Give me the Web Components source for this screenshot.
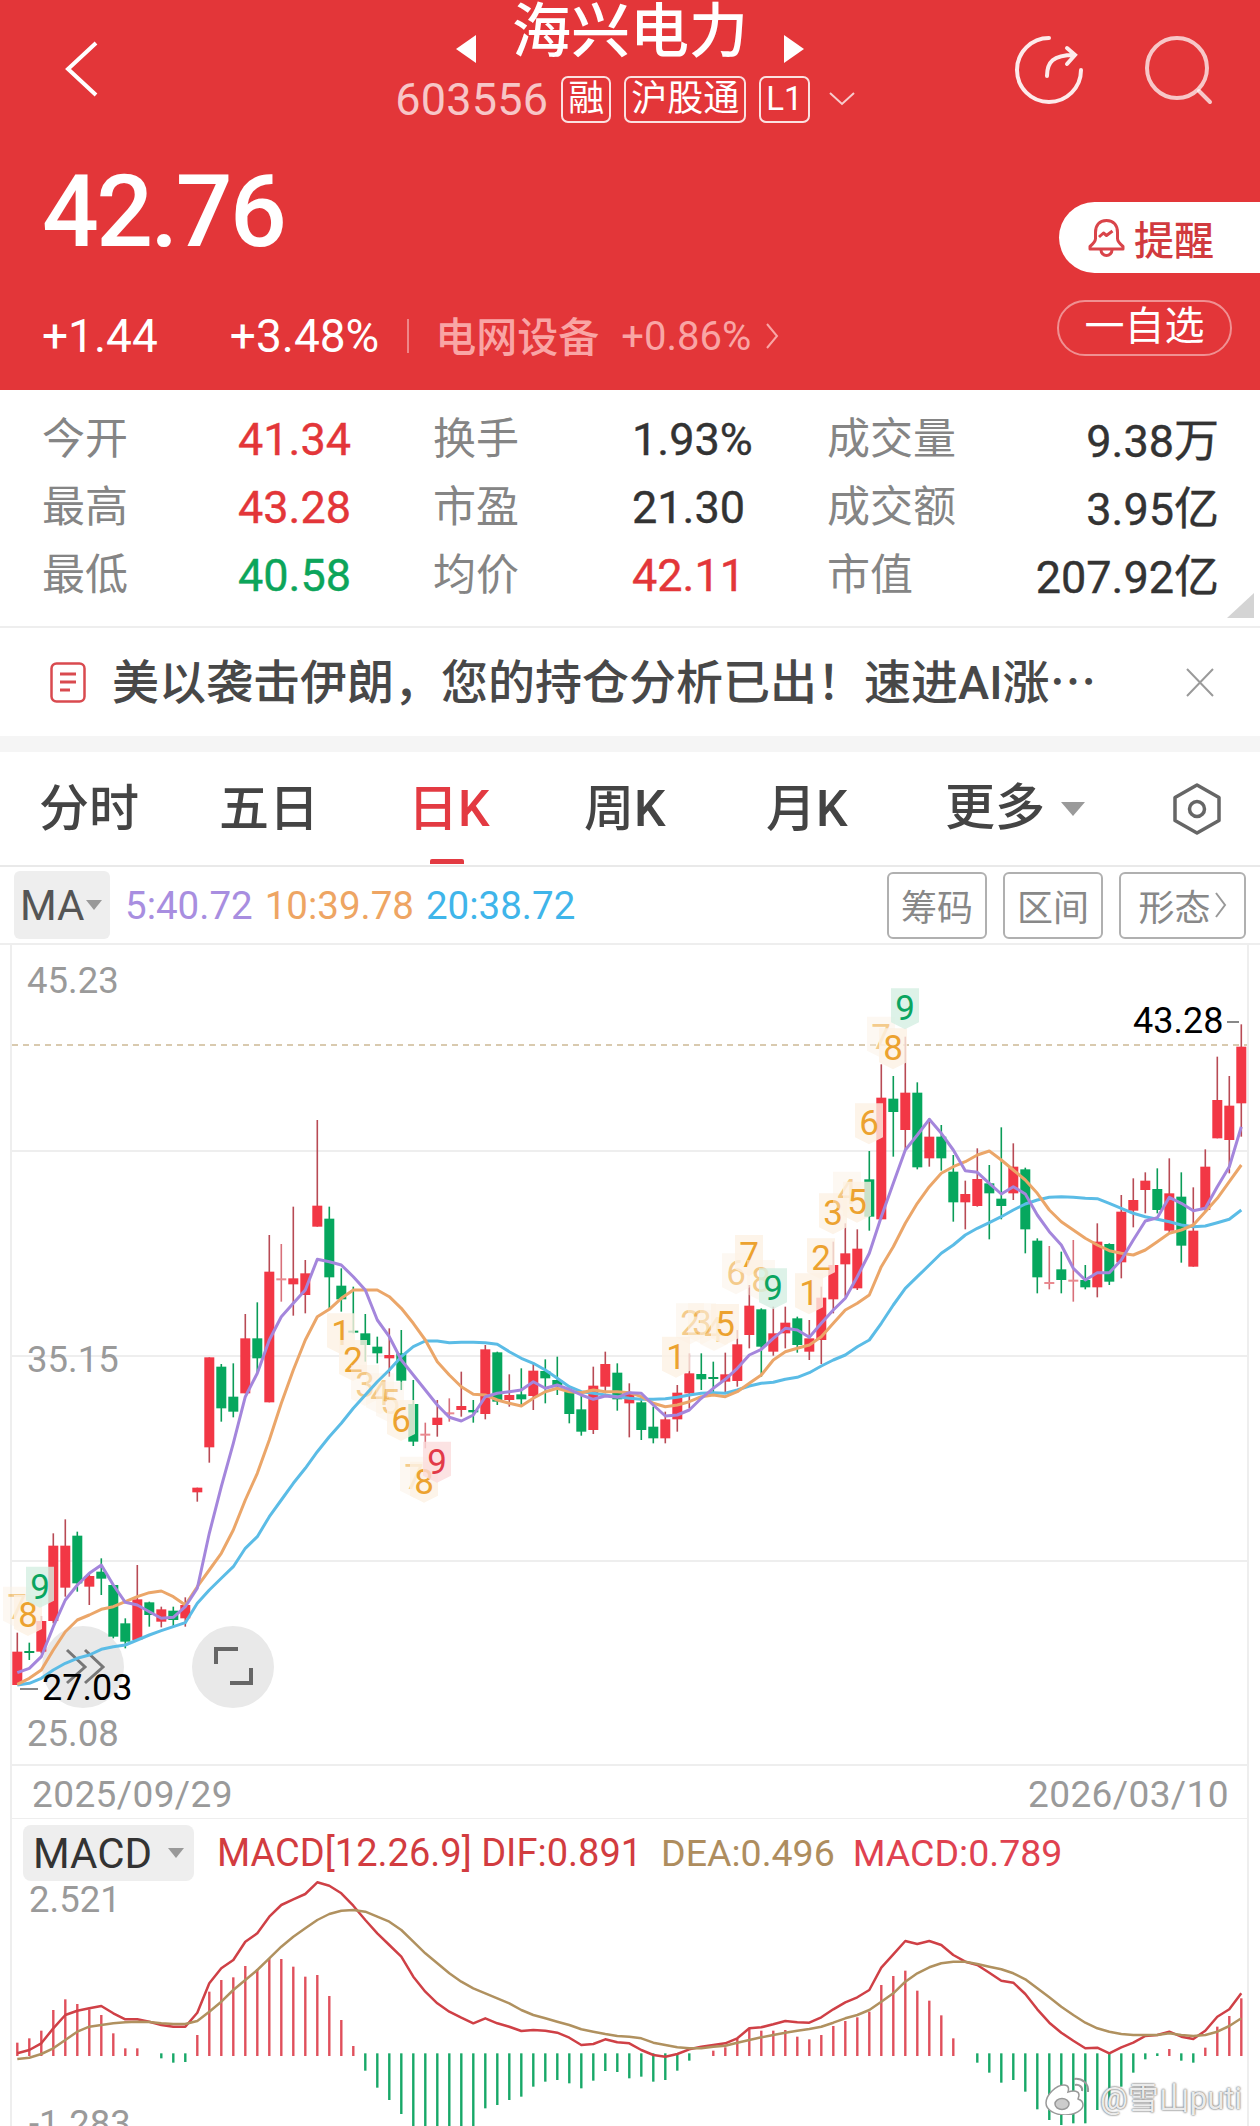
<!DOCTYPE html>
<html lang="zh-Hans">
<head>
<meta charset="utf-8">
<title>海兴电力</title>
<style>
  html, body { margin: 0; padding: 0; background: #fff; }
  body { width: 1260px; height: 2126px; overflow: hidden; font-family: Roboto, "Noto Sans CJK SC", sans-serif; }
</style>
</head>
<body>
<stock-header></stock-header>
<quote-stats></quote-stats>
<news-banner>美以袭击伊朗，您的持仓分析已出！速进AI涨<span style='font-family:"Noto Sans CJK SC",sans-serif'>…</span></news-banner>
<period-tabs></period-tabs>
<ma-bar></ma-bar>
<kline-chart></kline-chart>
<macd-panel></macd-panel>

<script>
const FONT = 'Roboto, "Noto Sans CJK SC", sans-serif'
const candleX = (i) => 17.3 + i * 12

class StockHeader extends HTMLElement {
  constructor() {
    super()
    this.attachShadow({ mode: 'open' })
    this.shadowRoot.innerHTML = `
      <style>
        :host { display: block; height: 390px; background: #e33639; color: #fff; font-family: ${FONT}; overflow: hidden; }
        .nav { display: grid; grid-template-columns: 1fr 474px 1fr; height: 174px; }
        .back { margin: 41px 0 0 64px; }
        .center { display: flex; flex-direction: column; align-items: center; }
        .title { display: flex; align-items: center; gap: 36px; height: 58px; margin-top: 3px; }
        .title h1 { margin: 0; font-size: 59px; line-height: 58px; font-weight: 500; }
        .tri { width: 20px; height: 28px; margin-top: 33px; }
        .code { display: flex; align-items: center; height: 48px; margin-top: 14px; padding-right: 10px; gap: 13px; white-space: nowrap; }
        .code .num { font-size: 45px; color: rgba(255,255,255,.72); letter-spacing: .2px; }
        .tag { box-sizing: border-box; height: 47px; padding: 0 5px; border: 2px solid rgba(255,255,255,.85); border-radius: 7px; font-size: 36px; line-height: 42px; }
        .tag.l { padding: 0 5px; font-size: 33px; }
        .code svg { margin-left: 6px; }
        .icons { display: flex; justify-content: flex-end; gap: 61px; padding: 35px 47px 0 0; }
        .quote { display: flex; justify-content: space-between; }
        .left { padding-left: 42px; }
        .price { font-size: 100px; line-height: 100px; font-weight: 500; letter-spacing: -2.600px; margin-top: -12px; }
        .change { display: flex; align-items: center; height: 50px; margin-top: 49px; font-size: 46px; }
        .change .pct { margin-left: 72px; }
        .change i { width: 2px; height: 34px; background: rgba(255,255,255,.4); margin: 0 26px 0 28px; }
        .change .sector { font-size: 41px; font-weight: 500; color: #f9a5a5; margin-top: -4px; }
        .change .rate { font-size: 40px; font-weight: 400; color: #f9a5a5; margin-left: 22px; }
        .change svg { margin-left: 14px; }
        .right { display: flex; flex-direction: column; align-items: flex-end; margin-top: 28px; }
        .remind { box-sizing: border-box; display: flex; align-items: center; gap: 9px; width: 201px; height: 71px; padding-left: 29px; background: #fff; border-radius: 36px 0 0 36px; color: #d13a3e; font-size: 40px; font-weight: 500; }
        .fav { box-sizing: border-box; width: 175px; height: 56px; margin: 27px 28px 0 0; border: 2px solid rgba(255,255,255,.45); border-radius: 28px; font-size: 40px; line-height: 50px; text-align: center; }
      </style>
      <div class="nav">
        <svg class="back" width="36" height="56" viewBox="0 0 36 56" fill="none" stroke="#fff" stroke-width="4"><path d="M32 2 4 28l28 26"/></svg>
        <div class="center">
          <div class="title">
            <svg class="tri" viewBox="0 0 20 28"><path d="M20 0v28L0 14z" fill="#fff"/></svg>
            <h1>海兴电力</h1>
            <svg class="tri" viewBox="0 0 20 28"><path d="M0 0v28l20-14z" fill="#fff"/></svg>
          </div>
          <div class="code">
            <span class="num">603556</span>
            <span class="tag">融</span>
            <span class="tag">沪股通</span>
            <span class="tag l">L1</span>
            <svg width="26" height="14" viewBox="0 0 26 14" fill="none" stroke="rgba(255,255,255,.75)" stroke-width="2"><path d="M1 1l12 11L25 1"/></svg>
          </div>
        </div>
        <div class="icons">
          <svg width="70" height="70" viewBox="1015 32 70 70" fill="none" stroke="#fff" stroke-width="4" stroke-linecap="round" stroke-opacity=".9">
            <path d="M1050 35a32 32 0 1 0 32 32"/>
            <path d="M1048 73c0-14 6-21 27-21M1068 45l8 7-8 9"/>
          </svg>
          <svg width="68" height="70" viewBox="1144 32 68 70" fill="none" stroke="#fff" stroke-width="4" stroke-linecap="round" stroke-opacity=".72">
            <circle cx="1176" cy="65" r="30"/><path d="M1198 88l11 11"/>
          </svg>
        </div>
      </div>
      <div class="quote">
        <div class="left">
          <div class="price">42.76</div>
          <div class="change">
            <span>+1.44</span><span class="pct">+3.48%</span><i></i>
            <span class="sector">电网设备</span><span class="rate">+0.86%</span>
            <svg width="14" height="28" viewBox="0 0 14 28" fill="none" stroke="#f9a5a5" stroke-width="2"><path d="M2 2l10 12L2 26"/></svg>
          </div>
        </div>
        <div class="right">
          <div class="remind">
            <svg width="37" height="38" viewBox="0 0 37 38" fill="none" stroke="#d9444a" stroke-width="3" stroke-linejoin="round"><path d="M18.500 1.500c-7.500 0-11 5.500-11 12v6c0 3-2 5-5.500 8v2.500h33V27.500c-3.500-3-5.500-5-5.500-8v-6c0-6.500-3.500-12-11-12z"/><path d="M13 31c0 3 2.500 5.500 5.500 5.500S24 34 24 31"/><path d="M11 18l4.500-4 3 2.500 6-4.500"/></svg>
            <span>提醒</span>
          </div>
          <div class="fav">一自选</div>
        </div>
      </div>`
  }
}
customElements.define('stock-header', StockHeader)

class QuoteStats extends HTMLElement {
  constructor() {
    super()
    this.attachShadow({ mode: 'open' })
    const rows = [
      ['今开', '41.34', 'r', '换手', '1.93%', '', '成交量', '9.38万'],
      ['最高', '43.28', 'r', '市盈', '21.30', '', '成交额', '3.95亿'],
      ['最低', '40.58', 'g', '均价', '42.11', 'r', '市值', '207.92亿']
    ]
    const cells = rows.map((r) => `
      <span class="k">${r[0]}</span><span class="v ${r[2]}">${r[1]}</span>
      <span class="k">${r[3]}</span><span class="v ${r[5]}">${r[4]}</span>
      <span class="k">${r[6]}</span><span class="v end">${r[7]}</span>`).join('')
    this.shadowRoot.innerHTML = `
      <style>
        :host { display: block; position: relative; height: 236px; border-bottom: 2px solid #eee; font-family: ${FONT}; }
        .grid { display: grid; grid-template-columns: 196px 195px 199px 195px 1fr 220px; grid-auto-rows: 68px; align-items: center; padding: 11px 41px 0 42px; }
        .k { font-size: 43px; color: #858585; }
        .v { font-size: 45px; color: #333; white-space: nowrap; -webkit-text-stroke: .4px currentColor; padding-top: 9px; }
        .v.r { color: #e33639; } .v.g { color: #0ca55b; }
        .end { text-align: right; padding-top: 4px; }
        .corner { position: absolute; right: 6px; bottom: 8px; width: 27px; height: 25px; background: #d4d4d4; clip-path: polygon(100% 0, 100% 100%, 0 100%); }
      </style>
      <div class="grid">${cells}</div>
      <div class="corner"></div>`
  }
}
customElements.define('quote-stats', QuoteStats)

class NewsBanner extends HTMLElement {
  constructor() {
    super()
    this.attachShadow({ mode: 'open' })
    this.shadowRoot.innerHTML = `
      <style>
        :host { display: flex; align-items: center; height: 108px; padding-left: 50px; border-bottom: 16px solid #f5f5f5; font-family: ${FONT}; font-size: 47px; font-weight: 500; color: #484848; }
        .text { margin: -7px 0 0 26px; white-space: nowrap; flex: 1; }
        .x { margin-right: 46px; }
      </style>
      <svg width="36" height="41" viewBox="0 0 36 41" fill="none" stroke="#d94a4f" stroke-width="2.500"><rect x="1.500" y="1.500" width="33" height="38" rx="5"/><path d="M10 12h16M10 20h16M10 28h10" stroke-width="3"/></svg>
      <div class="text"><slot></slot></div>
      <svg class="x" width="28" height="29" viewBox="0 0 28 29" fill="none" stroke="#9a9a9a" stroke-width="2"><path d="M1 1l26 27M27 1 1 28"/></svg>`
  }
}
customElements.define('news-banner', NewsBanner)

class PeriodTabs extends HTMLElement {
  constructor() {
    super()
    this.attachShadow({ mode: 'open' })
    const tabs = [['分时', 180], ['五日', 189], ['日K', 176, true], ['周K', 182], ['月K', 179]]
    this.shadowRoot.innerHTML = `
      <style>
        :host { display: flex; align-items: center; height: 113px; padding-left: 39px; border-bottom: 2px solid #e9e9e9; font-family: ${FONT}; font-size: 50px; font-weight: 500; color: #444; }
        .t { position: relative; height: 113px; line-height: 115px; white-space: nowrap; }
        .on { color: #e33a42; }
        .on::after { content: ""; position: absolute; left: 22px; bottom: 1px; width: 34px; height: 5px; background: #e33a42; border-radius: 2px 2px 0 0; }
        .more { display: flex; align-items: center; gap: 16px; }
        .hex { margin-left: auto; margin-right: 39px; }
      </style>
      ${tabs.map((t) => `<div class="t ${t[2] ? 'on' : ''}" style="width:${t[1]}px">${t[0]}</div>`).join('')}
      <div class="t more">更多<svg width="24" height="14" viewBox="0 0 24 14"><path d="M0 0h24L12 14z" fill="#9a9a9a"/></svg></div>
      <svg class="hex" width="48" height="52" viewBox="0 0 48 52" fill="none" stroke="#666" stroke-width="3.500" stroke-linejoin="round"><path d="M24 2 46 14.500v23L24 50 2 37.500v-23z"/><circle cx="24" cy="26" r="7.500"/></svg>`
  }
}
customElements.define('period-tabs', PeriodTabs)

class MaBar extends HTMLElement {
  constructor() {
    super()
    this.attachShadow({ mode: 'open' })
    this.shadowRoot.innerHTML = `
      <style>
        :host { display: flex; align-items: center; height: 76px; padding: 0 14px; border-bottom: 2px solid #eee; font-family: ${FONT}; font-size: 38.500px; }
        .ma { box-sizing: border-box; display: flex; align-items: center; gap: 2px; width: 96px; height: 68px; padding-left: 6px; background: #eee; border-radius: 6px; color: #555; font-size: 42px; }
        .vals { display: flex; gap: 12px; margin-left: 15px; }
        .btns { display: flex; gap: 16px; margin-left: auto; }
        .b { box-sizing: border-box; display: flex; align-items: center; justify-content: center; gap: 4px; width: 100px; height: 67px; border: 2px solid #b0b0b0; border-radius: 6px; color: #888; font-size: 36px; }
        .b.w { width: 127px; }
      </style>
      <div class="ma">MA<svg width="16" height="10" viewBox="0 0 16 10"><path d="M0 0h16L8 10z" fill="#999"/></svg></div>
      <div class="vals">
        <span style="color:#a88ee0">5:40.72</span>
        <span style="color:#eea563">10:39.78</span>
        <span style="color:#3fb5ea">20:38.72</span>
      </div>
      <div class="btns">
        <div class="b">筹码</div>
        <div class="b">区间</div>
        <div class="b w">形态<svg width="12" height="26" viewBox="0 0 12 26" fill="none" stroke="#999" stroke-width="2"><path d="M1 1l9 12-9 12"/></svg></div>
      </div>`
  }
}
customElements.define('ma-bar', MaBar)

// candle rows: wick top, body top, body bottom, wick bottom, colour
// y values are in thirds of a pixel below y=940, read off the zoomed reference
const CANDLES = [
  [2078,2135,2235,2235,'r'],[2108,2133,2137,2160,'g'],[2028,2043,2135,2140,'r'],[1780,1817,2043,2050,'r'],
  [1738,1817,1943,1970,'r'],[1775,1787,1930,1955,'g'],[1900,1908,1940,1995,'r'],[1855,1895,1916,1965,'g'],
  [1935,1935,2090,2095,'g'],[2035,2050,2105,2125,'g'],[1875,1978,2100,2100,'r'],[1985,1987,2025,2060,'g'],
  [2000,2008,2045,2062,'r'],[2000,2012,2040,2060,'g'],[1972,1995,2035,2060,'r'],[1643,1643,1657,1685,'r'],
  [1252,1252,1522,1568,'r'],[1272,1280,1405,1445,'g'],[1270,1370,1415,1432,'g'],[1122,1195,1360,1360,'r'],
  [1087,1195,1255,1300,'g'],[885,995,1387,1387,'r'],[912,1015,1018,1085,'r'],[800,1015,1033,1127,'r'],
  [960,1000,1065,1120,'r'],[540,797,860,860,'r'],[800,836,1012,1105,'g'],[985,1037,1078,1115,'g'],
  [1040,1172,1176,1180,'g'],[1122,1180,1215,1265,'g'],[1190,1220,1240,1270,'g'],[1165,1245,1255,1310,'r'],
  [1170,1240,1322,1350,'g'],[1320,1392,1505,1518,'g'],[1448,1481,1484,1525,'r'],[1380,1433,1455,1490,'r'],
  [1375,1417,1420,1445,'r'],[1295,1398,1410,1430,'r'],[1380,1410,1417,1448,'g'],[1215,1228,1422,1438,'r'],
  [1235,1237,1385,1395,'g'],[1303,1365,1380,1400,'r'],[1285,1363,1378,1400,'g'],[1270,1292,1368,1410,'r'],
  [1258,1293,1315,1390,'g'],[1250,1320,1335,1365,'g'],[1350,1355,1422,1450,'g'],[1355,1408,1475,1487,'g'],
  [1280,1337,1470,1482,'r'],[1235,1272,1340,1360,'r'],[1270,1298,1378,1412,'g'],[1330,1360,1390,1492,'r'],
  [1370,1387,1470,1500,'g'],[1400,1460,1495,1510,'g'],[1415,1438,1495,1510,'r'],[1335,1358,1438,1475,'r'],
  [1240,1300,1360,1405,'r'],[1240,1302,1318,1350,'g'],[1265,1311,1314,1360,'g'],[1238,1303,1325,1360,'r'],
  [1170,1213,1323,1340,'r'],[1035,1097,1185,1225,'r'],[1105,1108,1220,1310,'g'],[1100,1180,1235,1247,'r'],
  [1100,1148,1180,1225,'r'],[1130,1135,1215,1238,'g'],[1140,1195,1235,1260,'r'],[1040,1073,1200,1272,'r'],
  [905,975,1078,1120,'r'],[850,940,973,1070,'r'],[868,926,1045,1050,'r'],[633,718,830,872,'g'],
  [373,473,838,838,'r'],[408,476,516,650,'g'],[290,458,570,630,'r'],[427,458,682,688,'g'],
  [535,590,655,680,'r'],[555,590,655,692,'g'],[645,695,787,845,'g'],[722,762,787,868,'r'],
  [625,717,798,800,'r'],[675,730,760,898,'g'],[562,776,798,838,'g'],[610,680,760,780,'r'],
  [683,688,868,940,'g'],[895,902,1012,1060,'g'],[918,1026,1029,1048,'r'],[935,988,1020,1060,'g'],
  [900,1019,1022,1085,'r'],[975,1020,1042,1048,'g'],[850,905,1042,1072,'r'],[910,912,1025,1035,'g'],
  [765,815,967,1015,'r'],[715,780,812,862,'r'],[697,722,750,820,'r'],[685,747,810,820,'g'],
  [655,760,872,878,'r'],[697,770,917,968,'g'],[742,872,980,980,'r'],[628,680,810,815,'r'],
  [350,480,595,595,'r'],[408,497,600,700,'r'],[253,320,490,590,'r']
]
const MA5 = [2198,2185,2150,2060,1980,1935,1900,1875,1935,1987,1995,2015,2035,2032,2000,1945,1780,1640,1510,1370,1300,1200,1130,1090,1050,958,965,975,1010,1050,1140,1190,1260,1305,1350,1395,1432,1443,1425,1370,1360,1355,1350,1325,1345,1335,1348,1365,1378,1368,1372,1358,1360,1395,1428,1425,1410,1375,1345,1318,1285,1245,1228,1195,1165,1170,1192,1150,1110,1075,1010,940,830,730,630,585,538,580,630,692,697,730,762,740,762,825,875,915,985,1020,998,998,960,900,843,833,772,790,812,805,740,680,560]
const MA10 = [2233,2215,2190,2130,2075,2040,2025,2008,2000,1985,1970,1958,1953,1970,1995,1940,1890,1840,1770,1680,1600,1500,1390,1290,1200,1130,1108,1075,1050,1050,1050,1070,1105,1150,1200,1265,1305,1340,1363,1365,1380,1390,1398,1375,1355,1345,1355,1358,1350,1355,1355,1358,1370,1390,1400,1395,1385,1370,1365,1370,1355,1330,1305,1260,1235,1225,1215,1190,1150,1110,1090,1065,980,920,850,790,740,700,680,665,645,633,660,690,720,760,810,845,870,895,915,932,940,945,930,905,880,870,855,815,775,725,675]
const MA20 = [2235,2230,2215,2190,2170,2155,2145,2128,2120,2115,2100,2085,2072,2060,2048,1990,1950,1915,1880,1825,1790,1730,1680,1630,1585,1535,1490,1450,1405,1365,1325,1290,1250,1220,1203,1203,1208,1207,1207,1208,1213,1235,1255,1270,1290,1315,1340,1355,1360,1365,1370,1375,1378,1378,1376,1372,1365,1360,1358,1360,1350,1338,1330,1327,1318,1312,1298,1278,1260,1245,1220,1200,1150,1095,1045,1010,975,940,915,885,865,848,830,810,792,780,772,770,772,775,776,790,805,820,830,838,845,855,860,858,848,838,810]
// turn-count tags: x in px, y in thirds, digit, faded, tone
const MARKS = [
  [17,2000,'7',1],[28,2025,'8',0],[40,1940,'9',0,'g'],
  [341,1180,'1',0],[353,1260,'2',0],[365,1335,'3',1],[380,1360,'4',1],[390,1385,'5',1],[401,1440,'6',0],[414,1610,'7',1],[424,1625,'8',0],[437,1565,'9',0,'r'],
  [676,1250,'1',0],[690,1150,'2',1],[702,1150,'3',1],[714,1170,'4',1],[725,1152,'5',0],[736,1000,'6',1],[749,945,'7',0],[761,1020,'8',1],[773,1045,'9',0,'g'],
  [809,1060,'1',0],[821,955,'2',0],[833,820,'3',0],[847,755,'4',1],[857,785,'5',0],[869,550,'6',0],[881,290,'7',1],[893,325,'8',0],[905,205,'9',0,'g']
]
const toY = (t) => 940 + t / 3
const linePath = (arr, y) => arr.map((v, i) => `${i ? 'L' : 'M'}${candleX(i).toFixed(1)} ${y(v).toFixed(1)}`).join('')

class KlineChart extends HTMLElement {
  constructor() {
    super()
    this.attachShadow({ mode: 'open' })
    const candles = CANDLES.map((c, i) => {
      const x = candleX(i)
      const fill = c[4] === 'r' ? '#f23745' : '#06a75e'
      const wick = c[4] === 'r' ? '#b84a55' : '#0a9c58'
      const doji = c[2] - c[1] < 6
      const body = doji
        ? `<rect x="${x - 5}" y="${toY(c[1])}" width="10" height="2" fill="${c[4] === 'r' ? '#ea8a90' : wick}"/>`
        : `<rect x="${x - 5}" y="${toY(c[1])}" width="10" height="${(c[2] - c[1]) / 3}" fill="${fill}"/>`
      return `<rect x="${x - 0.8}" y="${toY(c[0])}" width="1.6" height="${(c[3] - c[0]) / 3}" fill="${doji && c[4] === 'r' ? '#d8707a' : wick}"/>${body}`
    }).join('')
    const marks = MARKS.map((m) => {
      const y = toY(m[1])
      const tone = m[4] === 'g'
        ? ['#d5efe2', '#0aa560']
        : m[4] === 'r' ? ['#fbdcdc', '#e23a48'] : ['#fdf1e3', '#eca22f']
      return `<g opacity="${m[3] ? 0.55 : 1}">
        <path d="M${m[0] - 14} ${y - 20}h28v34l-14 7-14-7z" fill="${tone[0]}" fill-opacity=".8"/>
        <text class="mark" x="${m[0]}" y="${y + 12}" text-anchor="middle" fill="${tone[1]}">${m[2]}</text></g>`
    }).join('')
    const grid = [1151, 1356, 1561, 1765, 1819].map((y) => `<rect x="10" y="${y - 1}" width="1239" height="2" fill="#eee"/>`).join('')
    this.shadowRoot.innerHTML = `
      <style>
        :host { display: block; height: 874px; font-family: ${FONT}; }
        svg { display: block; }
        text { font-family: ${FONT}; }
        .axis { font-size: 36.500px; fill: #9a9a9a; }
        .ext { font-size: 36px; fill: #000; }
        .date { font-size: 37px; fill: #9a9a9a; letter-spacing: .4px; }
        .mark { font-size: 35px; }
      </style>
      <svg width="1260" height="874" viewBox="0 945 1260 874">
        <rect x="10" y="945" width="2" height="874" fill="#eee"/>
        <rect x="1247" y="945" width="2" height="874" fill="#eee"/>
        ${grid}
        <path d="M12 1045H1247" stroke="#cdb995" stroke-width="1.500" stroke-dasharray="6 5"/>
        <text class="axis" x="27" y="993">45.23</text>
        <text class="axis" x="27" y="1372">35.15</text>
        <text class="axis" x="27" y="1746">25.08</text>
        <circle cx="83" cy="1667" r="41" fill="#e9e9e9"/>
        <circle cx="233" cy="1667" r="41" fill="#e9e9e9"/>
        ${candles}
        <path d="M67 1650l18 17-18 16M85 1650l18 17-18 16" fill="none" stroke="#777" stroke-width="3"/>
        <path d="M216 1664v-15h22M251 1668v15h-21" fill="none" stroke="#666" stroke-width="4"/>
        ${marks}
        <path d="${linePath(MA20, toY)}" fill="none" stroke="#5bbce6" stroke-width="3" stroke-linejoin="round"/>
        <path d="${linePath(MA10, toY)}" fill="none" stroke="#eba669" stroke-width="3" stroke-linejoin="round"/>
        <path d="${linePath(MA5, toY)}" fill="none" stroke="#a486dc" stroke-width="3" stroke-linejoin="round"/>
        <text class="ext" x="1133" y="1033">43.28</text>
        <rect x="1227" y="1021" width="12" height="2" fill="#888"/>
        <text class="ext" x="42" y="1700">27.03</text>
        <rect x="20" y="1688" width="18" height="2" fill="#888"/>
        <text class="date" x="32" y="1807">2025/09/29</text>
        <text class="date" x="1028" y="1807">2026/03/10</text>
      </svg>`
  }
}
customElements.define('kline-chart', KlineChart)

// MACD values are in thirds of a pixel below y=1740
const BARS = [908,895,872,810,778,792,808,825,880,925,925,0,955,968,966,885,755,720,712,678,687,655,657,680,710,705,768,840,918,992,1043,1080,1122,1200,1200,1200,1200,1200,1200,1105,1095,1080,1070,1040,1025,1020,1030,1045,1022,993,996,1015,1010,1025,1020,992,962,0,932,922,897,865,872,872,870,890,898,885,858,843,832,815,735,708,692,752,782,826,895,0,968,998,1028,1020,1055,1108,1140,1155,1150,1150,1110,1100,1040,998,958,948,927,962,968,923,860,828,775]
const DIF = [940,930,910,865,825,812,805,798,820,838,838,845,855,860,860,818,730,685,660,605,580,530,495,478,462,427,437,460,497,540,580,615,650,710,755,790,815,833,850,835,850,860,873,870,872,878,893,915,912,898,907,910,930,945,950,942,928,920,915,910,895,865,862,853,843,847,848,832,808,787,772,750,683,643,603,612,603,615,645,665,675,698,722,728,762,808,848,878,902,925,923,940,922,908,888,885,875,890,897,872,830,808,760]
const DEA = [957,953,942,925,900,875,860,855,850,847,845,846,850,852,852,843,815,785,750,720,690,655,620,590,565,540,522,512,510,515,530,545,570,605,640,670,700,725,745,760,775,790,810,825,835,845,855,868,875,882,888,890,895,908,915,922,925,925,920,917,908,900,892,885,878,872,867,860,848,835,825,810,785,760,725,700,682,670,665,665,672,680,688,700,718,745,772,800,825,848,865,875,882,885,885,885,880,885,888,885,875,858,835]
const macdY = (v) => 1740 + v / 3

class MacdPanel extends HTMLElement {
  constructor() {
    super()
    this.attachShadow({ mode: 'open' })
    const bars = BARS.map((v, i) => {
      if (!v) return ''
      const x = candleX(i) - 1.2
      return v < 948
        ? `<rect x="${x}" y="${macdY(v)}" width="2.400" height="${macdY(948) - macdY(v)}" fill="#e0505c"/>`
        : `<rect x="${x}" y="${macdY(940)}" width="2.400" height="${macdY(v) - macdY(940)}" fill="#18a868"/>`
    }).join('')
    this.shadowRoot.innerHTML = `
      <style>
        :host { display: block; position: relative; height: 307px; overflow: hidden; font-family: ${FONT};
          background: linear-gradient(#eee,#eee) 10px 0/2px 100% no-repeat, linear-gradient(#eee,#eee) 1247px 0/2px 100% no-repeat; }
        .head { display: flex; align-items: center; height: 56px; padding: 6px 0 0 23px; font-size: 37.500px; white-space: pre; }
        .pick { box-sizing: border-box; display: flex; align-items: center; gap: 16px; width: 171px; height: 56px; padding-left: 10px; background: #eee; border-radius: 8px; color: #333; font-size: 42px; }
        .dif { margin-left: 23px; color: #d23c40; font-size: 38px; }
        .dea { margin-left: 19px; color: #ae8d5e; }
        .bar { margin-left: 18px; color: #e04250; }
        svg.plot { display: block; }
        text { font-family: ${FONT}; }
        .axis { font-size: 36.500px; fill: #9a9a9a; }
        .mark { position: absolute; left: 1044px; top: 254px; display: flex; align-items: center; gap: 10px; }
        .mark span { font-size: 31px; color: rgba(255,255,255,.85); text-shadow: 0 0 2px #777, 0 0 2px #777; white-space: nowrap; }
      </style>
      <div class="head">
        <div class="pick">MACD<svg width="16" height="10" viewBox="0 0 16 10"><path d="M0 0h16L8 10z" fill="#999"/></svg></div>
        <span class="dif">MACD[12.26.9] DIF:0.891</span>
        <span class="dea">DEA:0.496</span>
        <span class="bar">MACD:0.789</span>
      </div>
      <svg class="plot" width="1260" height="245" viewBox="0 1881 1260 245">
        <text class="axis" x="29" y="1912">2.521</text>
        <text class="axis" x="29" y="2136">-1.283</text>
        ${bars}
        <path d="${linePath(DIF, macdY)}" fill="none" stroke="#cf4046" stroke-width="2.500" stroke-linejoin="round"/>
        <path d="${linePath(DEA, macdY)}" fill="none" stroke="#b0915f" stroke-width="2.500" stroke-linejoin="round"/>
      </svg>
      <div class="mark">
        <svg width="46" height="38" viewBox="0 0 46 38" fill="#fff" stroke="#999" stroke-width="1.500">
          <path d="M2 26c0-8 10-18 18-18 5 0 5 4 4 7 6-2 11-1 11 3 0 2-1 3-1 4 3 1 5 3 5 6 0 5-8 10-18 10S2 33 2 26z"/>
          <ellipse cx="18" cy="27" rx="7" ry="5.500" fill="#ccc"/>
          <path d="M30 2c8-1 15 4 14 13M31 8c4-1 8 2 7 6" fill="none" stroke-width="2"/>
        </svg>
        <span>@雪山puti</span>
      </div>`
  }
}
customElements.define('macd-panel', MacdPanel)
</script>
</body>
</html>
